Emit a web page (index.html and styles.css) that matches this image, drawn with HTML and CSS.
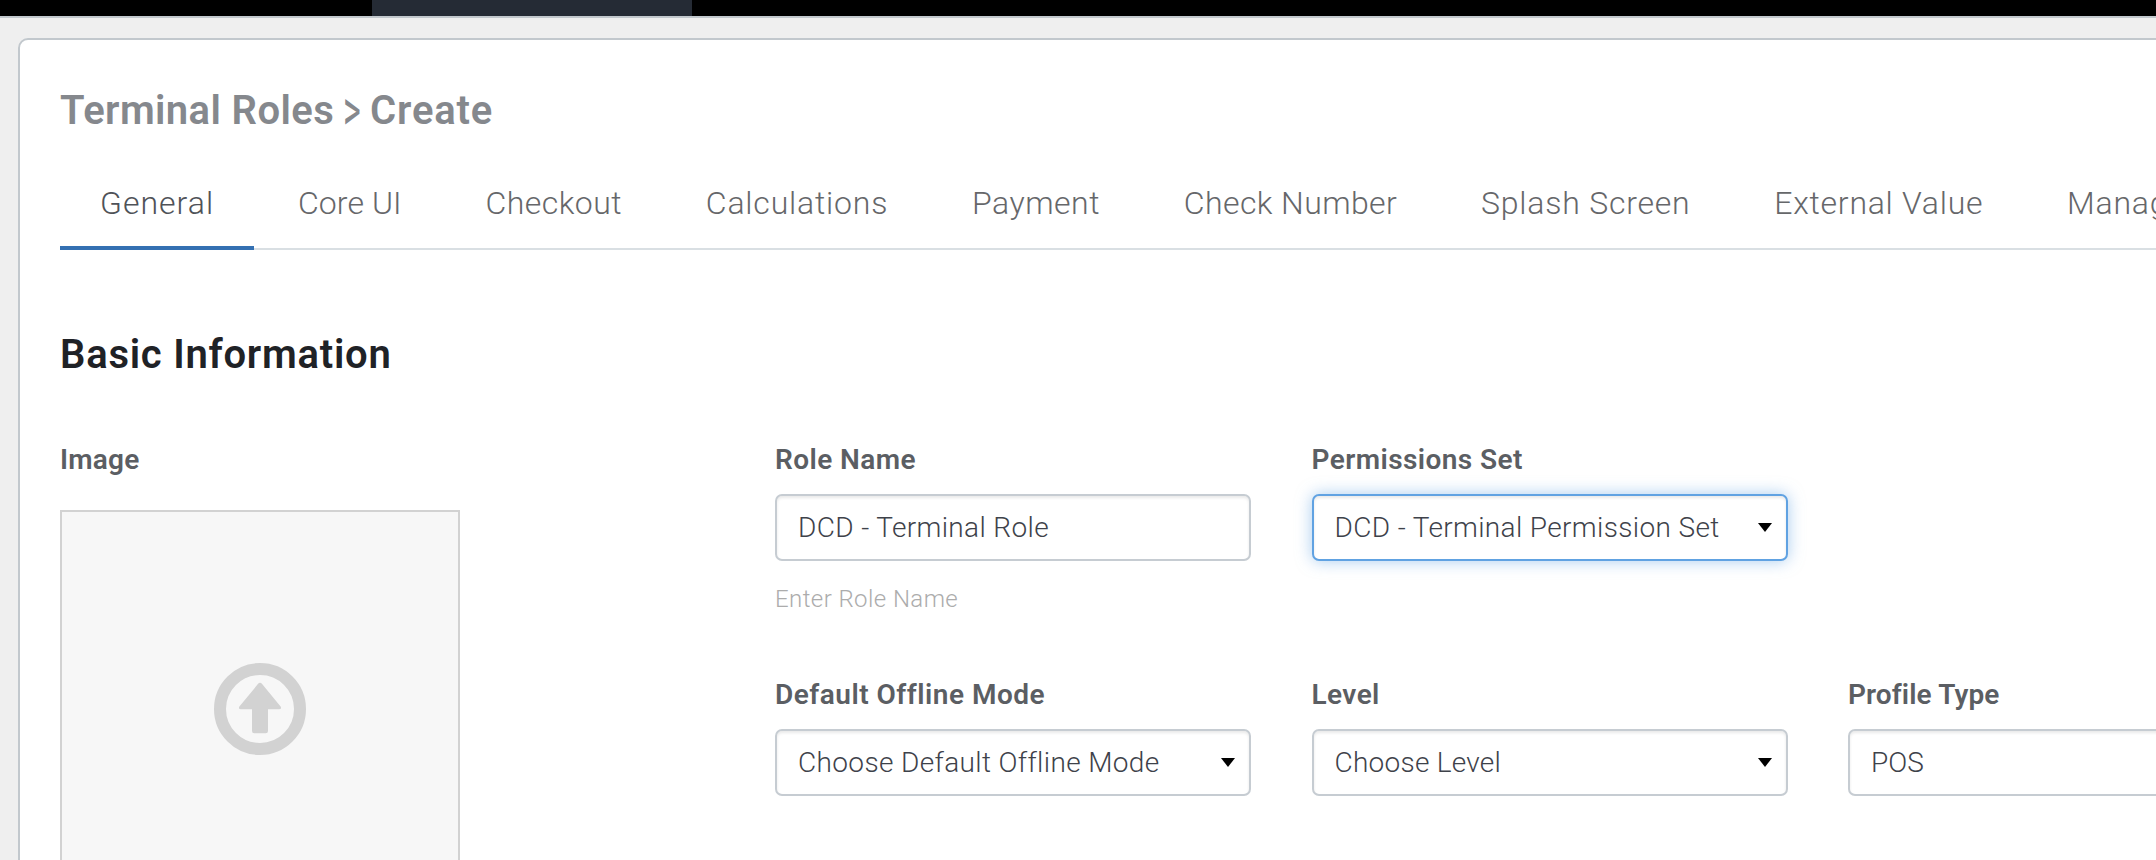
FILE: index.html
```
<!DOCTYPE html>
<html lang="en">
<head>
<meta charset="utf-8">
<title>Terminal Roles</title>
<link rel="stylesheet" href="styles.css">
</head>
<body>
<header class="topbar"><div class="topbar-active"></div></header>
<main class="card">
  <h1 class="title"><span>Terminal Roles</span><span class="crumb-sep">&gt;</span><span class="crumb-last">Create</span></h1>
  <nav class="tabs">
    <a class="tab tab-general active">General</a>
    <a class="tab tab-core">Core UI</a>
    <a class="tab tab-checkout">Checkout</a>
    <a class="tab tab-calculations">Calculations</a>
    <a class="tab tab-payment">Payment</a>
    <a class="tab tab-check">Check Number</a>
    <a class="tab tab-splash">Splash Screen</a>
    <a class="tab tab-external">External Value</a>
    <a class="tab tab-manager">Manager</a>
  </nav>
  <h2 class="section-title">Basic Information</h2>
  <div class="form">
    <div class="image-col">
      <div class="label image-label">Image</div>
      <div class="upload">
        <svg width="92" height="92" viewBox="0 0 92 92">
          <circle cx="46" cy="46" r="40" fill="none" stroke="#d2d2d2" stroke-width="12"/>
          <path d="M44.3 20.6Q46 18.800 47.700 20.600L66.600 43.500Q68 46.300 65 46.300H54V68Q54 70.300 51.700 70.300H40.300Q38 70.300 38 68V46.300H27Q24 46.300 25.400 43.500Z" fill="#d2d2d2"/>
        </svg>
      </div>
    </div>
    <div class="fields">
      <div class="field">
        <div class="label">Role Name</div>
        <div class="control">DCD - Terminal Role</div>
        <div class="hint">Enter Role Name</div>
      </div>
      <div class="field">
        <div class="label">Permissions Set</div>
        <div class="control focused"><span>DCD - Terminal Permission Set</span><svg class="caret" width="14" height="9" viewBox="0 0 14 9"><path d="M0 0H14L7 9Z"/></svg></div>
      </div>
      <div class="field row-two">
        <div class="label wide">Default Offline Mode</div>
        <div class="control"><span>Choose Default Offline Mode</span><svg class="caret" width="14" height="9" viewBox="0 0 14 9"><path d="M0 0H14L7 9Z"/></svg></div>
      </div>
      <div class="field row-two">
        <div class="label">Level</div>
        <div class="control"><span class="tight">Choose Level</span><svg class="caret" width="14" height="9" viewBox="0 0 14 9"><path d="M0 0H14L7 9Z"/></svg></div>
      </div>
      <div class="field row-two">
        <div class="label narrow">Profile Type</div>
        <div class="control"><span class="snug">POS</span></div>
      </div>
    </div>
  </div>
</main>
</body>
</html>
```
FILE: styles.css
```
* { box-sizing: border-box; }
html, body { height: 100%; }
body {
  margin: 0;
  overflow: hidden;
  background: #efefef;
  font-family: Roboto, "Liberation Sans", sans-serif;
  font-weight: 300;
}
.topbar {
  height: 18px;
  padding-left: 372px;
  background: #000;
  border-bottom: 2px solid #c2c8cd;
}
.topbar-active { width: 320px; height: 16px; background: #252b35; }
.card {
  width: 2400px;
  height: 1000px;
  margin: 20px 0 0 18px;
  padding: 47px 40px 0;
  background: #fff;
  border: 2px solid #c2c8cd;
  border-radius: 10px;
}
.title {
  display: flex;
  margin: 0;
  font-size: 40px;
  line-height: 48px;
  font-weight: 600;
  letter-spacing: 0.4px;
  color: #85888d;
}
.crumb-sep {
  width: 36px;
  text-align: center;
  font-weight: 400;
  transform: scale(0.85, 1.45);
}
.crumb-last { letter-spacing: 0.8px; }
.tabs {
  display: flex;
  gap: 3.8px;
  height: 74px;
  margin-top: 41px;
  box-shadow: inset 0 -2px #d9dfe3;
}
.tab {
  padding: 8px 40px 0;
  font-size: 32px;
  line-height: 38px;
  white-space: nowrap;
  color: #66676a;
}
.tab-general { letter-spacing: 1px; }
.tab-core { letter-spacing: 0.1px; }
.tab-checkout { letter-spacing: 0.45px; }
.tab-calculations { letter-spacing: 0.8px; }
.tab-payment { letter-spacing: 0.5px; }
.tab-check { letter-spacing: 0.4px; }
.tab-splash { letter-spacing: 0.78px; }
.tab-external, .tab-manager { letter-spacing: 0.74px; }
.active { color: #4f5258; border-bottom: 4px solid #3470b2; }
.section-title {
  margin: 81px 0 0;
  font-size: 40px;
  line-height: 48px;
  font-weight: 600;
  letter-spacing: 0.75px;
  color: #1f2226;
}
.form { display: flex; margin-top: 64px; }
.image-col { width: 715px; }
.label {
  height: 51px;
  font-size: 28px;
  line-height: 34px;
  font-weight: 600;
  letter-spacing: 0.42px;
  color: #5b5e63;
}
.wide { letter-spacing: 0.5px; }
.narrow { letter-spacing: 0.1px; }
.image-label { height: 67px; letter-spacing: 0.2px; }
.upload {
  display: flex;
  align-items: center;
  justify-content: center;
  width: 400px;
  height: 400px;
  padding-bottom: 2px;
  background: #f7f7f7;
  border: 2px solid #d2d2d2;
}
.fields {
  display: grid;
  grid-template-columns: repeat(3, 476px);
  grid-template-rows: 235px auto;
  column-gap: 60.5px;
}
.row-two { grid-row: 2; }
.control {
  display: flex;
  align-items: center;
  justify-content: space-between;
  height: 67px;
  padding: 0 14px 0 21px;
  font-size: 28px;
  letter-spacing: 0.36px;
  white-space: nowrap;
  color: #3e424a;
  background: #fff;
  border: 2px solid #c6ccd2;
  border-radius: 7px;
  box-shadow: inset 0 2px 3px rgba(0, 0, 0, 0.09);
}
.focused {
  border-color: #60a2e2;
  box-shadow: inset 0 2px 3px rgba(0, 0, 0, 0.09), 0 0 16px rgba(96, 162, 226, 0.55);
}
.caret { margin-bottom: 1px; }
.tight { letter-spacing: 0.25px; }
.snug { letter-spacing: 0; }
.hint {
  margin-top: 23px;
  font-size: 24px;
  line-height: 30px;
  letter-spacing: 0.42px;
  color: #acacac;
}
```
